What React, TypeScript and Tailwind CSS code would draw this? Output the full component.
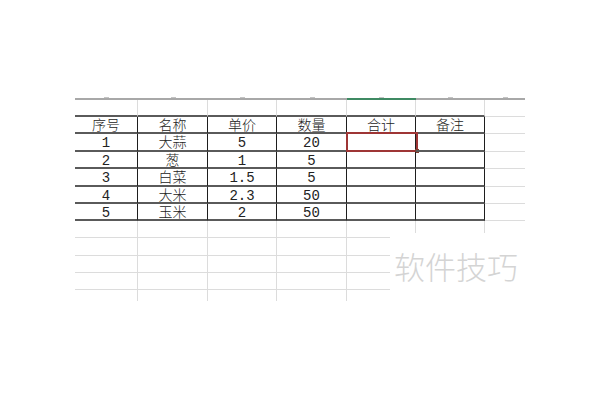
import React from "react";

const colW = ["w-[63px]", "w-[70px]", "w-[69px]", "w-[70px]", "w-[69px]", "w-[69px]", "w-[40px]"];
const rowH = [
  "h-[17px]", "h-[17px]", "h-[18px]", "h-[17px]", "h-[18px]", "h-[17px]",
  "h-[17px]", "h-[17px]", "h-[18px]", "h-[17px]", "h-[17px]", "h-[11px]",
];

const data: string[][] = [
  ["", "", "", "", "", ""],
  ["序号", "名称", "单价", "数量", "合计", "备注"],
  ["1", "大蒜", "5", "20", "", ""],
  ["2", "葱", "1", "5", "", ""],
  ["3", "白菜", "1.5", "5", "", ""],
  ["4", "大米", "2.3", "50", "", ""],
  ["5", "玉米", "2", "50", "", ""],
];

function Cell({ r, c }: { r: number; c: number }) {
  const inTableRow = r >= 1 && r <= 6;
  const darkBottom = r <= 6 && c <= 5;
  const darkRight = inTableRow && c <= 5;
  const last = r === 11;
  let bottom = "";
  if (!last) {
    bottom = darkBottom ? "border-b-2 border-b-[#5a5a5a]" : "border-b border-b-[#dcdcdc]";
  }
  let right = "";
  if (c < 6) {
    right = darkRight ? "border-r border-r-[#1e1e1e]" : "border-r border-r-[#dcdcdc]";
  }
  const text = r <= 6 && c <= 5 ? data[r][c] : "";
  const selected = r === 2 && c === 4;
  return (
    <div
      className={`${colW[c]} ${rowH[r]} ${bottom} ${right} relative flex items-center justify-center box-border`}
    >
      <span className="pt-[2px] text-[14px] leading-none font-light text-[#222222]">
        {text}
      </span>
      {selected && (
        <div className="absolute -left-[1px] -top-[2px] w-[72px] h-[20px] border-2 border-[#9e3535]">
          <div className="absolute -right-[3px] -bottom-[3px] w-[4px] h-[4px] bg-[#7d3b2e]" />
        </div>
      )}
    </div>
  );
}

export default function App() {
  const rows = Array.from({ length: 12 }, (_, i) => i);
  const cols = Array.from({ length: 7 }, (_, i) => i);
  return (
    <div
      className="relative w-[600px] h-[400px] bg-white overflow-hidden"
      style={{ fontFamily: '"Liberation Mono", "Noto Sans CJK SC", monospace' }}
    >
      <div className="flex flex-col pt-[95px] pl-[75px]">
        <div className="flex h-[3px]">
          {cols.map((c) => (
            <div key={c} className={`${colW[c]} flex justify-center items-end`}>
              <div className="w-[5px] h-[1px] bg-[#c4c4c4]" />
            </div>
          ))}
        </div>
        <div className="flex h-[2px]">
          {cols.map((c) => (
            <div
              key={c}
              className={`${colW[c]} h-[2px] ${c === 4 ? "bg-[#3f8a63]" : "bg-[#a8a8a8]"}`}
            />
          ))}
        </div>
        {rows.map((r) => (
          <div key={r} className="flex">
            {cols.map((c) => (
              <Cell key={c} r={r} c={c} />
            ))}
          </div>
        ))}
      </div>
      <div className="absolute left-[390px] top-[233px] w-[150px] h-[75px] bg-white flex items-start">
        <span
          className="mt-[17px] ml-[4px] text-[31px] leading-none font-light text-[#d4d4d4]"
          style={{ fontFamily: '"Noto Sans CJK SC", sans-serif' }}
        >
          软件技巧
        </span>
      </div>
    </div>
  );
}
